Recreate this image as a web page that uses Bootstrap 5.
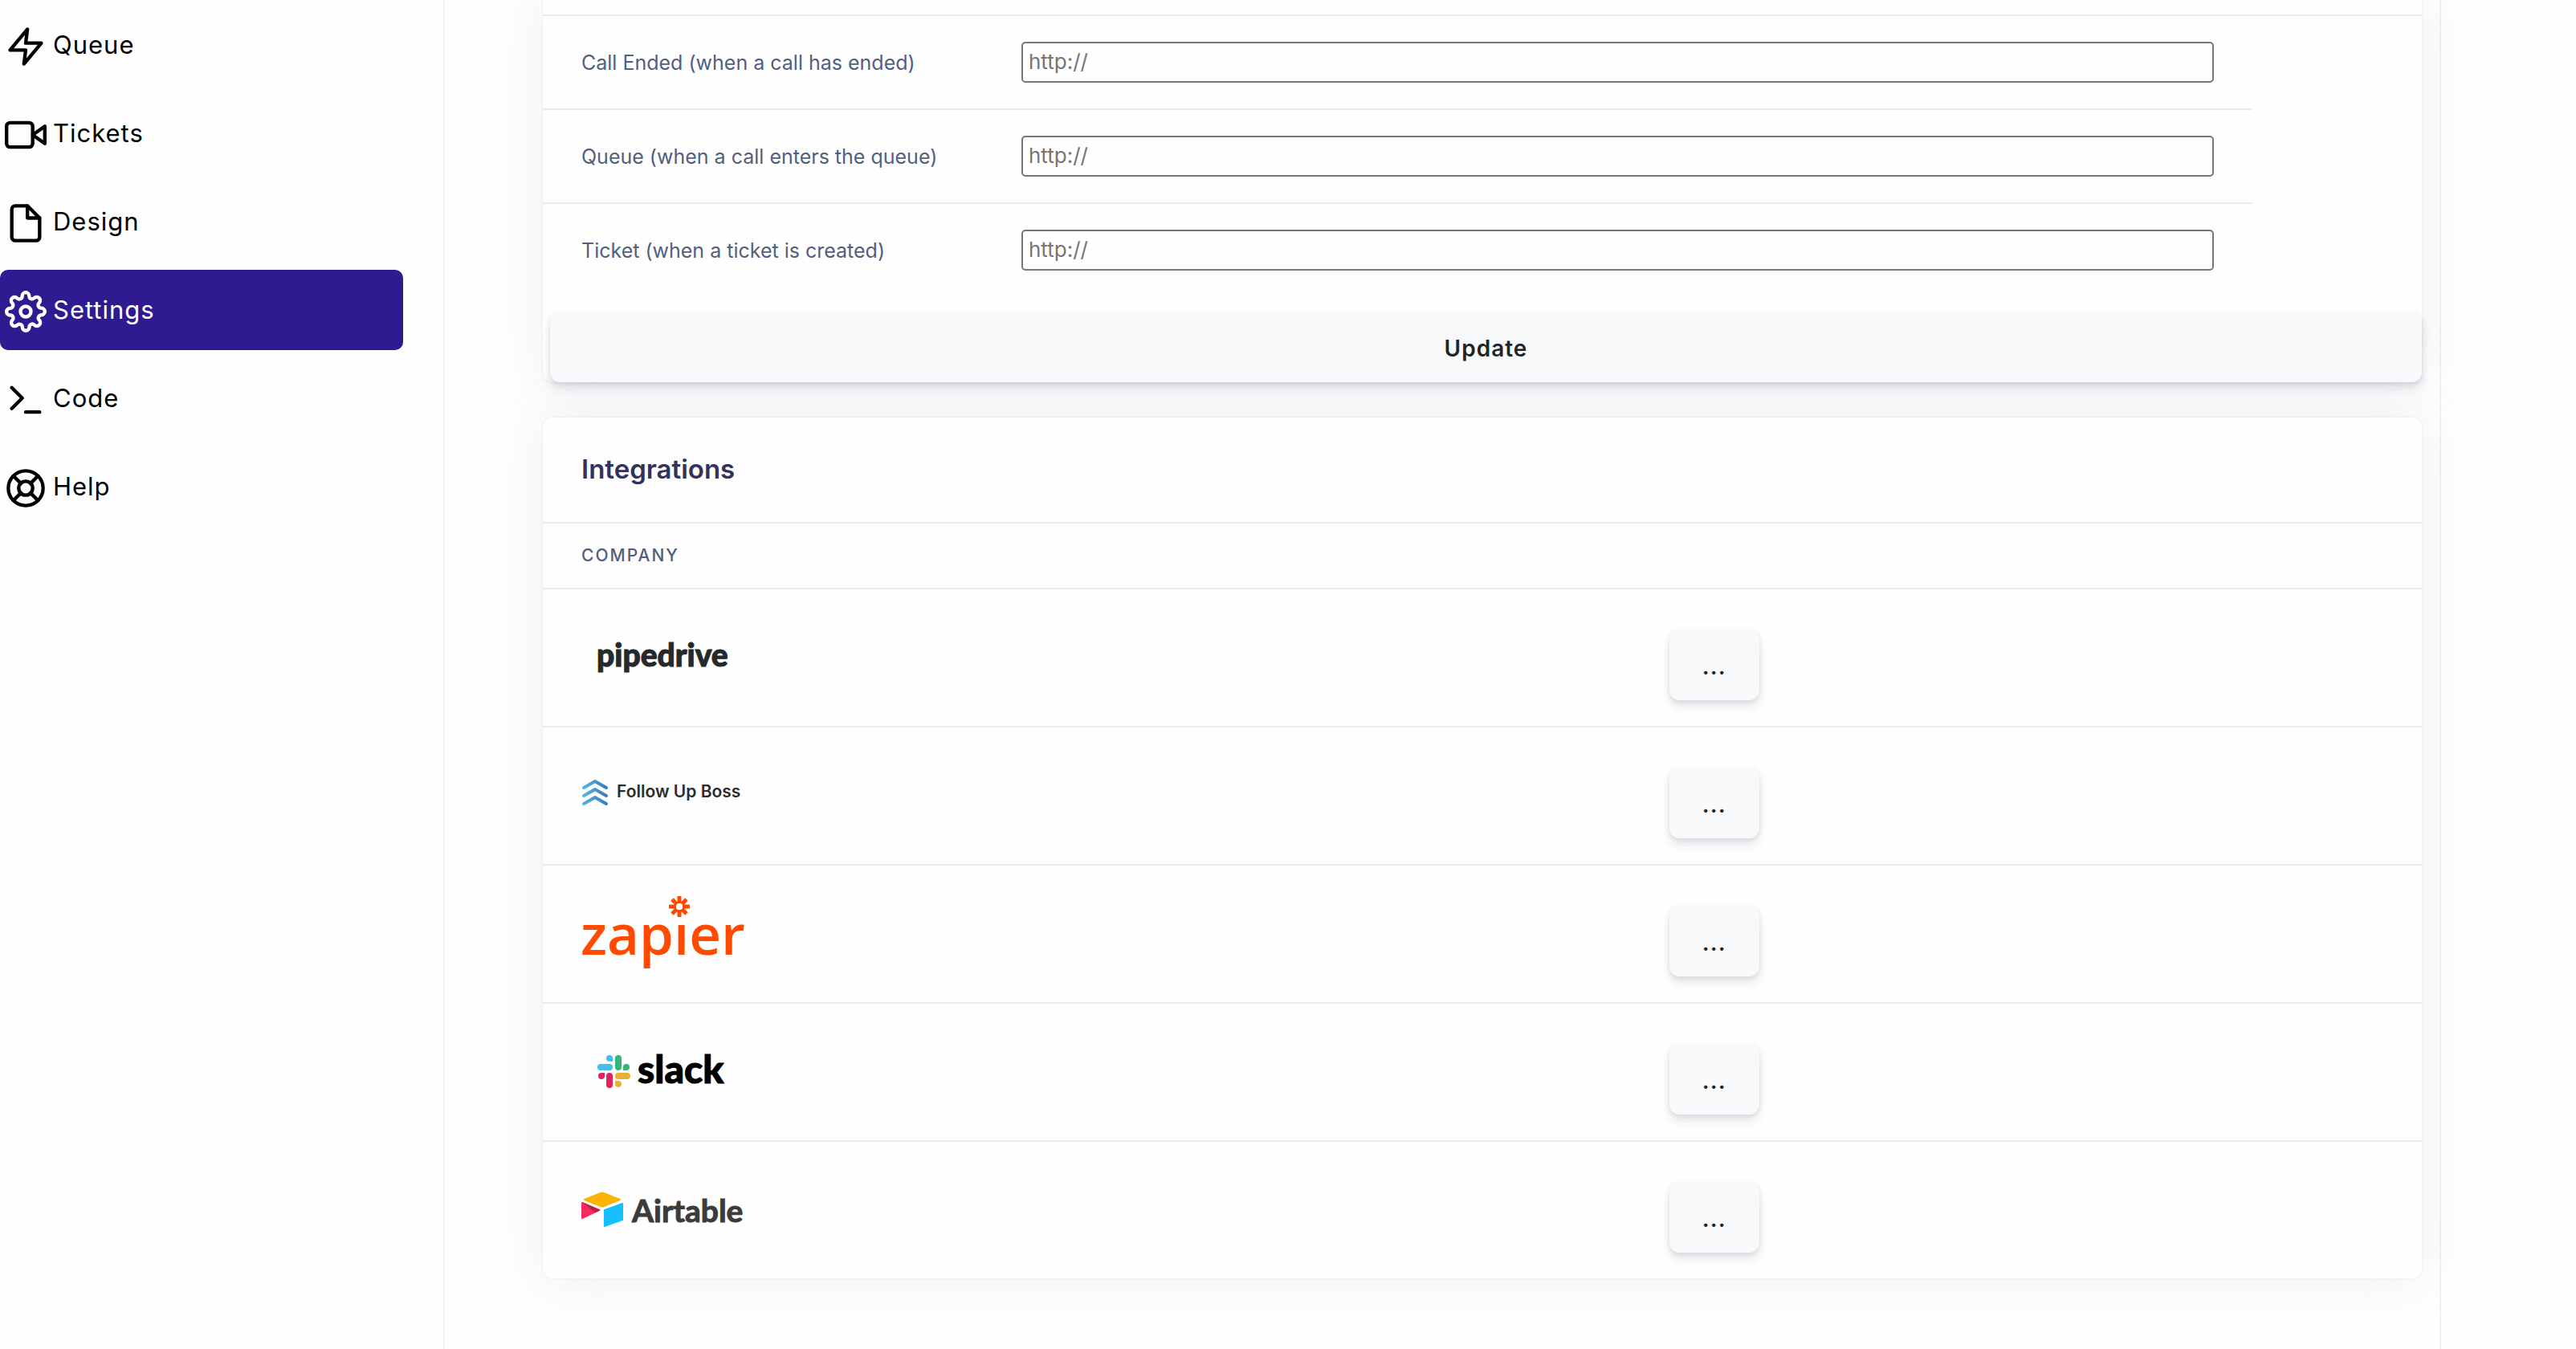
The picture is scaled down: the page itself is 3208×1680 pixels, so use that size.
<!DOCTYPE html>
<html lang="en">
<head>
<meta charset="utf-8">
<meta name="viewport" content="width=device-width, initial-scale=1">
<title>Settings</title>
<link href="https://cdn.jsdelivr.net/npm/bootstrap@5.3.0/dist/css/bootstrap.min.css" rel="stylesheet">
<style>
  body { font-family: Inter, "Liberation Sans", sans-serif; font-size: 26px; line-height: 32px; color: #525f7f; background: #fefefe; }
  .side-nav { flex: 0 0 554px; border-right: 2px solid #f2f3f3; padding: 6px 50px 0 0; }
  .side-nav .nav-link { height: 100px; margin-bottom: 10px; padding: 0 6px; gap: 8px; color: #000; font-size: 31px; letter-spacing: 1px; border-radius: 10px; }
  .side-nav .nav-link.active { background: #2f1a91; color: #fff; }
  .side-nav svg { width: 52px; height: 52px; margin-top: 4px; fill: none; stroke: currentColor; stroke-width: 2; stroke-linecap: round; stroke-linejoin: round; }
  .content-area { margin-right: 168px; padding: 0 22px 0 122px; border-right: 2px solid #f0f1f1; }
  .panel { background: #fefefe; border: 0; border-radius: 12px; box-shadow: 0 0 64px rgba(136,152,170,.15), 0 0 2px rgba(0,0,0,.09); }
  .panel-first { border-radius: 0 0 12px 12px; margin-bottom: 44px; }
  .panel-first .panel-top { height: 20px; border-bottom: 2px solid #ebebeb; }
  .plain-table { --bs-table-bg: transparent; --bs-table-color: #525f7f; margin: 0; border-color: #ebebeb; }
  .plain-table > :not(caption) > * > * { padding: 32px 48px; border-bottom-width: 2px; }
  .hooks-table { width: 91%; }
  .hooks-table > tbody > tr:last-child > *, .apps-table > tbody > tr:last-child > * { border-bottom: 0; }
  .hooks-table .name-col { width: 548px; white-space: nowrap; font-size: 25px; font-weight: 400; }
  .url-box { display: block; width: 100%; height: 51px; padding: 0 7px 2px; border: 2px solid #767676; border-radius: 5px; background: #fefefe; }
  .url-box::placeholder { color: #757575; }
  .soft-btn { --bs-btn-color: #212529; --bs-btn-bg: #f8f9fb; --bs-btn-border-color: #f8f9fb; --bs-btn-hover-bg: #f0f2f5; height: 88px; padding: 3px 40px 0; border-radius: 12px; font-size: 28px; font-weight: 600; letter-spacing: 1px; box-shadow: 0 8px 12px rgba(50,50,93,.11), 0 2px 6px rgba(0,0,0,.08); }
  .update-btn { margin: 19px 0 0 9px; }
  .panel-title { height: 132px; padding: 0 48px; border-bottom: 2px solid #ebebeb; }
  .panel-title h3 { font-size: 33px; font-weight: 600; color: #32325d; }
  .plain-table.apps-table > thead > tr > th { padding: 24px 48px; font-size: 21px; font-weight: 500; letter-spacing: 2px; }
  .apps-table .logo-col { width: 57.9%; }
  .plain-table.apps-table > tbody > tr > .action-col { padding-top: 50px; vertical-align: top; }
  .apps-table svg { display: block; width: 200px; height: 106px; overflow: visible; }
</style>
<script src="https://cdn.jsdelivr.net/npm/bootstrap@5.3.0/dist/js/bootstrap.bundle.min.js"></script>
</head>
<body>
<div class="d-flex min-vh-100">
  <aside class="side-nav">
    <nav class="nav flex-column" aria-label="Main">
      <a class="nav-link d-flex align-items-center" href="#queue"><svg viewBox="0 0 24 24"><path d="M13 2 3 14h9l-1 8 10-12h-9l1-8z"/></svg>Queue</a>
      <a class="nav-link d-flex align-items-center" href="#tickets"><svg viewBox="0 0 24 24"><path d="m23 7-7 5 7 5V7z"/><rect x="1" y="5" width="15" height="14" rx="2"/></svg>Tickets</a>
      <a class="nav-link d-flex align-items-center" href="#design"><svg viewBox="0 0 24 24"><path d="M13 2H6a2 2 0 0 0-2 2v16a2 2 0 0 0 2 2h12a2 2 0 0 0 2-2V9z"/><path d="M13 2v7h7"/></svg>Design</a>
      <a class="nav-link d-flex align-items-center active" aria-current="page" href="#settings"><svg viewBox="0 0 24 24"><circle cx="12" cy="12" r="3"/><path d="M19.4 15a1.65 1.65 0 0 0 .33 1.82l.06.06a2 2 0 0 1 0 2.83 2 2 0 0 1-2.83 0l-.06-.06a1.65 1.65 0 0 0-1.82-.33 1.65 1.65 0 0 0-1 1.51V21a2 2 0 0 1-2 2 2 2 0 0 1-2-2v-.09A1.65 1.65 0 0 0 9 19.4a1.65 1.65 0 0 0-1.82.33l-.06.06a2 2 0 0 1-2.83 0 2 2 0 0 1 0-2.83l.06-.06a1.65 1.65 0 0 0 .33-1.82 1.65 1.65 0 0 0-1.51-1H3a2 2 0 0 1-2-2 2 2 0 0 1 2-2h.09A1.65 1.65 0 0 0 4.6 9a1.65 1.65 0 0 0-.33-1.82l-.06-.06a2 2 0 0 1 0-2.83 2 2 0 0 1 2.83 0l.06.06a1.65 1.65 0 0 0 1.82.33H9a1.65 1.65 0 0 0 1-1.51V3a2 2 0 0 1 2-2 2 2 0 0 1 2 2v.09a1.65 1.65 0 0 0 1 1.51 1.65 1.65 0 0 0 1.82-.33l.06-.06a2 2 0 0 1 2.83 0 2 2 0 0 1 0 2.83l-.06.06a1.65 1.65 0 0 0-.33 1.82V9a1.65 1.65 0 0 0 1.51 1H21a2 2 0 0 1 2 2 2 2 0 0 1-2 2h-.09a1.65 1.65 0 0 0-1.51 1z"/></svg>Settings</a>
      <a class="nav-link d-flex align-items-center" href="#code"><svg viewBox="0 0 24 24"><path d="m4 17 6-6-6-6M12 19h8"/></svg>Code</a>
      <a class="nav-link d-flex align-items-center" href="#help"><svg viewBox="0 0 24 24"><circle cx="12" cy="12" r="10"/><circle cx="12" cy="12" r="4"/><path d="m4.93 4.93 4.24 4.24M14.83 14.83l4.24 4.24M14.83 9.17l4.24-4.24M4.93 19.07l4.24-4.24"/></svg>Help</a>
    </nav>
  </aside>

  <main class="content-area flex-grow-1">
    <form class="panel panel-first">
      <div class="panel-top"></div>
      <table class="table plain-table hooks-table align-middle">
        <tbody>
          <tr>
            <th class="name-col" scope="row"><label class="d-block" for="hook-ended">Call Ended (when a call has ended)</label></th>
            <td><input class="url-box" id="hook-ended" type="text" placeholder="http://"></td>
          </tr>
          <tr>
            <th class="name-col" scope="row"><label class="d-block" for="hook-queue">Queue (when a call enters the queue)</label></th>
            <td><input class="url-box" id="hook-queue" type="text" placeholder="http://"></td>
          </tr>
          <tr>
            <th class="name-col" scope="row"><label class="d-block" for="hook-ticket">Ticket (when a ticket is created)</label></th>
            <td><input class="url-box" id="hook-ticket" type="text" placeholder="http://"></td>
          </tr>
        </tbody>
      </table>
      <div class="d-flex"><button class="btn soft-btn update-btn flex-grow-1" type="button">Update</button></div>
    </form>

    <section class="panel">
      <div class="panel-title d-flex align-items-center"><h3 class="mb-0">Integrations</h3></div>
      <table class="table plain-table apps-table align-middle">
        <thead>
          <tr><th class="logo-col" scope="col">COMPANY</th><th scope="col"></th></tr>
        </thead>
        <tbody>
          <tr>
            <td><svg viewBox="0 0 200 106"><text x="19" y="64" font-family="Lato, sans-serif" font-weight="900" font-size="39" fill="#26292c" stroke="#26292c" stroke-width="1">pipedrive</text></svg></td>
            <td class="action-col"><button class="btn soft-btn" type="button">...</button></td>
          </tr>
          <tr>
            <td><svg viewBox="0 0 200 106">
              <defs><linearGradient id="fub" gradientUnits="userSpaceOnUse" x1="1" y1="0" x2="33" y2="0"><stop offset="0" stop-color="#52b9e3"/><stop offset="1" stop-color="#3d74b9"/></linearGradient></defs>
              <path d="M3 43l14-8 14 8M3 53l14-8 14 8M3 63l14-8 14 8" fill="none" stroke="url(#fub)" stroke-width="4" stroke-linecap="round" stroke-linejoin="round"/>
              <text x="44" y="55" font-family="Inter, sans-serif" font-weight="600" font-size="21" fill="#2d2d2d">Follow Up Boss</text></svg></td>
            <td class="action-col"><button class="btn soft-btn" type="button">...</button></td>
          </tr>
          <tr>
            <td><svg viewBox="0 0 200 106">
              <text x="-1" y="79" font-family="Open Sans, sans-serif" font-weight="600" font-size="69" fill="#ff4a00">zapier</text>
              <path d="M108 4h28v32h-28z" fill="#fefefe"/>
              <path d="M122 6v9M122 23v9M109 19h9M126 19h9M113 10l6 6M125 22l6 6M131 10l-6 6M119 22l-6 6" fill="none" stroke="#ff4a00" stroke-width="5"/></svg></td>
            <td class="action-col"><button class="btn soft-btn" type="button">...</button></td>
          </tr>
          <tr>
            <td><svg viewBox="0 0 200 106">
              <g fill="#43bfeb"><path d="M39 40h-4a4 4 0 1 1 4-4z"/><rect x="20" y="43" width="19" height="8" rx="4"/></g>
              <g fill="#33b57c"><path d="M52 51v-4a4 4 0 1 1 4 4z"/><rect x="42" y="32" width="8" height="19" rx="4"/></g>
              <g fill="#e8b034"><path d="M42 64h4a4 4 0 1 1-4 4z"/><rect x="42" y="54" width="19" height="8" rx="4"/></g>
              <g fill="#de2360"><path d="M29 54v4a4 4 0 1 1-4-4z"/><rect x="31" y="54" width="8" height="19" rx="4"/></g>
              <text x="70" y="67" font-family="Lato, sans-serif" font-weight="900" font-size="48" fill="#000" stroke="#000" stroke-width="1">slack</text></svg></td>
            <td class="action-col"><button class="btn soft-btn" type="button">...</button></td>
          </tr>
          <tr>
            <td><svg viewBox="0 0 200 106">
              <g stroke-width="2" stroke-linejoin="round"><path d="M4 40l20-8q2-1 4 0l20 8-20 8q-2 1-4 0z" fill="#fcb400" stroke="#fcb400"/>
              <path d="M29 53l22-8v20l-22 8z" fill="#18bfff" stroke="#18bfff"/>
              <path d="M1 44l21 9-21 10z" fill="#f82b60" stroke="#f82b60"/></g>
              <path d="M1 43l23 10-7 3z" fill="#ba1e45"/>
              <text x="63" y="68" font-family="Lato, sans-serif" font-weight="700" font-size="39" fill="#3b3b3b" stroke="#3b3b3b" stroke-width="1">Airtable</text></svg></td>
            <td class="action-col"><button class="btn soft-btn" type="button">...</button></td>
          </tr>
        </tbody>
      </table>
    </section>
  </main>
</div>
</body>
</html>
